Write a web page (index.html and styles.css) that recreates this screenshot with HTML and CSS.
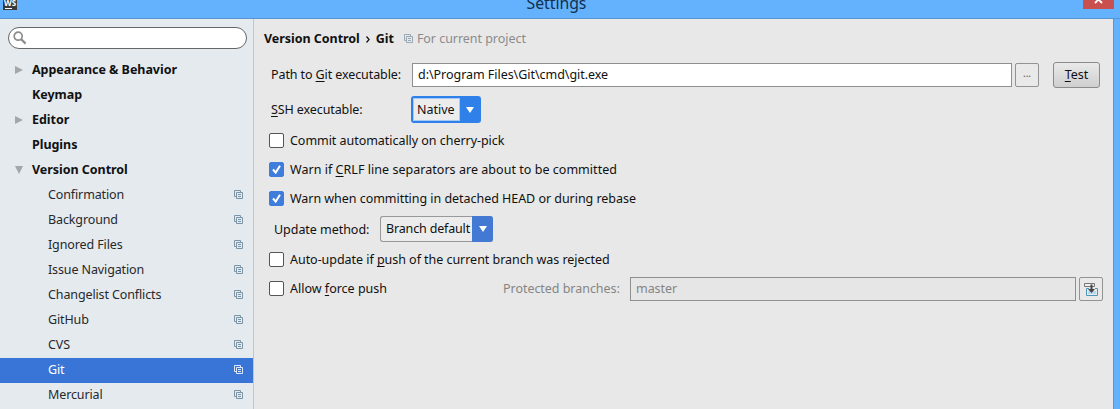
FILE: index.html
```html
<!DOCTYPE html>
<html lang="en">
<head>
<meta charset="utf-8">
<title>Settings</title>
<link rel="stylesheet" href="styles.css">
</head>
<body>
<svg class="defs" aria-hidden="true">
  <symbol id="copy" viewBox="0 0 9 9">
    <path d="M2.5 6.5h-2v-6h6v2M2.500 2.500h6v6h-6v-6M4 4.500h3M4 6.500h3" fill="none" stroke="currentColor"/>
  </symbol>
  <symbol id="down" viewBox="0 0 8 6"><path d="M0 0h8L4 6z" fill="currentColor"/></symbol>
  <symbol id="tick" viewBox="0 0 15 15"><path d="M4 7.5l2.7 3L11 3.8" fill="none" stroke="#fff" stroke-width="2"/></symbol>
</svg>
<header class="titlebar">
  <div class="logo">WS</div>
  <div class="title">Settings</div>
  <div class="close"><svg width="9" height="9" viewBox="0 0 9 9"><path d="M1 1l7 7M8 1L1 8" stroke="#fff" stroke-width="1.8"/></svg></div>
</header>
<div class="window">
  <nav class="sidebar">
    <div class="search"><svg width="14" height="14" viewBox="0 0 14 14" fill="none" stroke="#8c8c8c"><circle cx="5.2" cy="5.2" r="4" stroke-width="1.7"/><path d="M8.2 8.2l4.4 4.4" stroke-width="2.2"/></svg></div>
    <ul class="tree">
      <li class="top"><svg class="arrow" viewBox="0 0 8 8"><path d="M0 0l8 4-8 4z"/></svg><span>Appearance &amp; Behavior</span></li>
      <li class="top"><i class="arrow"></i><span>Keymap</span></li>
      <li class="top"><svg class="arrow" viewBox="0 0 8 8"><path d="M0 0l8 4-8 4z"/></svg><span>Editor</span></li>
      <li class="top"><i class="arrow"></i><span>Plugins</span></li>
      <li class="top"><svg class="arrow" viewBox="0 0 8 8"><path d="M0 0h8L4 8z"/></svg><span>Version Control</span></li>
      <li class="sub"><span>Confirmation</span><svg class="copy"><use href="#copy"/></svg></li>
      <li class="sub"><span>Background</span><svg class="copy"><use href="#copy"/></svg></li>
      <li class="sub"><span>Ignored Files</span><svg class="copy"><use href="#copy"/></svg></li>
      <li class="sub"><span>Issue Navigation</span><svg class="copy"><use href="#copy"/></svg></li>
      <li class="sub"><span>Changelist Conflicts</span><svg class="copy"><use href="#copy"/></svg></li>
      <li class="sub"><span>GitHub</span><svg class="copy"><use href="#copy"/></svg></li>
      <li class="sub"><span>CVS</span><svg class="copy"><use href="#copy"/></svg></li>
      <li class="sub selected"><span>Git</span><svg class="copy"><use href="#copy"/></svg></li>
      <li class="sub"><span>Mercurial</span><svg class="copy"><use href="#copy"/></svg></li>
    </ul>
  </nav>
  <main class="panel">
    <div class="crumbs"><b>Version Control</b><svg class="chevron" viewBox="0 0 4 7"><path d="M.5.5l2.6 3-2.6 3" fill="none" stroke="#111" stroke-width="1.2"/></svg><b>Git</b><svg class="copy"><use href="#copy"/></svg><span class="hint">For current project</span></div>
    <div class="row path">
      <label class="label"><span>Path to <u>G</u>it executable:</span></label>
      <div class="field">d:\Program Files\Git\cmd\git.exe</div>
      <button class="browse">...</button>
      <button class="test"><span><u>T</u>est</span></button>
    </div>
    <div class="row ssh">
      <label class="label"><span><u>S</u>SH executable:</span></label>
      <div class="combo focused"><span class="value">Native</span><span class="drop"><svg><use href="#down"/></svg></span></div>
    </div>
    <div class="row check c1"><i class="box"></i><span>Commit automatically on cherry-pick</span></div>
    <div class="row check c2"><i class="box on"><svg><use href="#tick"/></svg></i><span>Warn if <u>C</u>RLF line separators are about to be committed</span></div>
    <div class="row check c3"><i class="box on"><svg><use href="#tick"/></svg></i><span>Warn when committing in detached HEAD or during rebase</span></div>
    <div class="row update">
      <label class="label"><span>Update method:</span></label>
      <div class="combo"><span class="value">Branch default</span><span class="drop"><svg><use href="#down"/></svg></span></div>
    </div>
    <div class="row check c4"><i class="box"></i><span>Auto-update if <u>p</u>ush of the current branch was rejected</span></div>
    <div class="row check c5"><i class="box"></i><span class="allow">Allow <u>f</u>orce push</span>
      <label class="protected"><span>Protected branches:</span></label>
      <div class="field disabled">master</div>
      <button class="expand"><svg width="15" height="15" viewBox="0 0 15 15"><path d="M.5 1.500h10v3H.5z" fill="#eee" stroke="#777"/><path d="M5 6.5H2.500v7h11v-7H11" fill="none" stroke="#4f97b8"/><path d="M4 9h8v3H4z" fill="#b5d9ee"/><path d="M7.500 2.500v6" stroke="#444" stroke-width="2"/><path d="M4 7h7l-3.500 4z" fill="#444"/></svg></button>
    </div>
  </main>
</div>
</body>
</html>
```
FILE: styles.css
```css
* { box-sizing: border-box; }
body {
  margin: 0; width: 1120px; height: 409px; overflow: hidden;
  background: #64b1fd; color: #111;
  font: 12.5px/17px "Noto Sans", "Open Sans", sans-serif;
  letter-spacing: -0.04px;
}
.defs { display: none; }
svg { display: block; flex: none; }
button { padding: 0; margin: 0; font: inherit; color: inherit; letter-spacing: inherit; }
span, b { white-space: pre; }
u { text-decoration: underline; text-underline-offset: 2px; text-decoration-thickness: 1px; text-decoration-skip-ink: none; }

.titlebar {
  height: 19px; padding: 0 6px 0 3px; display: flex; justify-content: space-between;
  align-items: flex-start; border-bottom: 1px solid #5795d3;
}
.logo {
  width: 14px; height: 10px; background: #3a3a3a; color: #fff;
  font-size: 8px; font-weight: bold; line-height: 6px; text-align: center; letter-spacing: 0;
}
.logo::after { content: ""; display: block; width: 7px; height: 1px; margin: 2px 0 0 2px; background: #fff; }
.title { margin: -8px 0 0 13px; font-size: 15.8px; line-height: 22px; color: #10304f; }
.close {
  width: 31px; height: 9px; background: #c8504f; display: flex;
  justify-content: center; align-items: flex-end; padding-bottom: 5px;
}

.window { width: 1114px; height: 390px; display: flex; background: #e8e8e8; border-right: 1px solid #5795d3; }
.sidebar { width: 254px; background: #e5eaef; border-right: 1px solid #c3c6c9; flex: none; padding-top: 8px; }
.search {
  width: 239px; height: 22px; margin-left: 8px; padding-left: 4px;
  border: 1px solid #666; border-radius: 11px; background: #fff; display: flex; align-items: center;
}
.tree { list-style: none; margin: 9px 0 0; padding: 0; }
.tree li { height: 25px; display: flex; align-items: center; padding: 0 10px 2px 15px; }
.top { font-weight: bold; }
.arrow { width: 8px; height: 8px; margin-right: 9px; fill: #a4a6a8; flex: none; }
.tree .sub { padding-left: 48px; justify-content: space-between; color: #26292c; letter-spacing: -0.12px; }
.copy { width: 9px; height: 9px; color: #7c95a6; }
.tree .selected { background: #3875d7; color: #fff; }
.selected .copy { color: #dbe8fb; }

.panel { flex: 1; display: flex; flex-direction: column; padding: 11px 10px 0 10px; }
.crumbs { display: flex; align-items: center; height: 17px; }
.chevron { width: 4px; height: 7px; margin: 2px 6px 0 6px; }
.crumbs .copy { margin: 0 4px 0 10px; color: #9aa8b3; }
.hint { color: #8b8b8b; }
.row { display: flex; align-items: center; }
.path { height: 26px; margin-top: 15px; }
.label { padding-left: 7px; width: 148px; flex: none; letter-spacing: -0.1px; }
.path .label { padding-bottom: 1px; }
.field { border: 1px solid #8f8f8f; background: #fff; height: 24px; width: 600px; padding: 2px 5px; white-space: pre; }
.browse, .expand {
  width: 24px; height: 24px; margin-left: 3px; border: 1px solid #939393; border-radius: 2px;
  background: #e9e9e9; display: flex; align-items: center; justify-content: center; flex: none;
}
.browse { font-size: 10px; padding-bottom: 4px; color: #555; }
.test {
  width: 47px; height: 26px; margin-left: 14px; padding-bottom: 1px; border: 1px solid #8b8b8b; border-radius: 3px;
  background: linear-gradient(#e9e9e9, #cfcfcf);
}
.ssh { height: 27px; margin-top: 8px; }
.ssh .label { padding-bottom: 1px; }
.combo { height: 26px; display: flex; border: 1px solid #999; border-right: 0; border-radius: 3px; background: #ececec; }
.value { flex: 1; padding: 3px 0 0 5px; letter-spacing: -0.16px; }
.drop { width: 21px; margin: -1px 0; background: #4479d3; border-radius: 0 3px 3px 0; color: #fff; display: flex; align-items: center; justify-content: center; flex: none; }
.drop svg { width: 8px; height: 6px; }
.ssh .combo { width: 70px; height: 27px; margin-left: -1px; border: 2px solid #2f80e8; }
.focused .drop { width: 19px; margin: 0; background: #2f80e8; border-radius: 0; }
.focused .value { padding: 2px 0 0 3px; border: 1px solid #a5c9f5; letter-spacing: 0; }
.check { height: 17px; padding-left: 5px; }
.box { width: 15px; height: 15px; border: 1px solid #555; border-radius: 2px; background: #fff; margin-right: 6px; flex: none; }
.box.on { background: #3f7ddc; border-color: #3f7ddc; }
.box svg { width: 15px; height: 15px; margin: -1px; }
.c1 { margin-top: 9px; }
.c2, .c3 { margin-top: 12px; }
.c2 { letter-spacing: 0.035px; }
.update { height: 26px; margin-top: 9px; }
.update .label { width: 116px; padding: 0 0 0 10px; letter-spacing: -0.04px; }
.update .combo { width: 113px; }
.c4 { margin-top: 9px; }
.c5 { height: 24px; margin-top: 9px; }
.c5 .box { margin-bottom: 2px; }
.allow { width: 213px; padding-bottom: 2px; letter-spacing: 0; }
.protected { width: 127px; padding-bottom: 1px; color: #858585; }
.field.disabled { width: 446px; background: #e6e6e6; color: #858585; }
```
